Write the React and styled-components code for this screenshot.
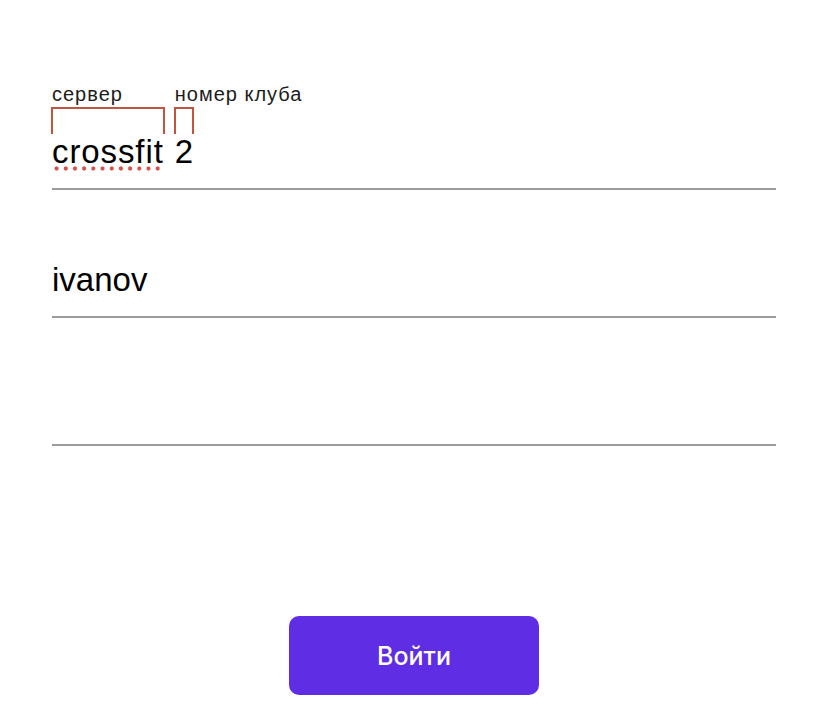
import React from 'react';
import styled, { createGlobalStyle } from 'styled-components';

const GlobalStyle = createGlobalStyle`
  html, body {
    margin: 0;
    padding: 0;
    background: #ffffff;
  }
  body {
    font-family: "Liberation Sans", Arial, sans-serif;
    color: #000;
  }
`;

const Page = styled.div`
  width: 828px;
  min-height: 725px;
  box-sizing: border-box;
  padding: 82px 52px 0;
  display: flex;
  flex-direction: column;
`;

const Field = styled.div`
  display: flex;
  flex-direction: column;
  padding-top: ${p => (p.first ? '0' : '72px')};
  padding-bottom: 18px;
  border-bottom: 2px solid #9b9b9b;
`;

const SegmentRow = styled.div`
  display: flex;
  align-items: flex-start;
  gap: 11px;
`;

const Segment = styled.div`
  display: flex;
  flex-direction: column;
  align-items: stretch;
`;

// подпись над сегментом, может быть шире самой скобки
const Label = styled.span`
  width: 0;
  white-space: nowrap;
  font-size: 20px;
  line-height: 24px;
  color: #1c1c1c;
  letter-spacing: 1px;
`;

const Bracket = styled.div`
  margin-top: 1px;
  height: 25px;
  border: 2px solid #c2553f;
  border-bottom: none;
  margin-left: -1px;
  margin-right: -1px;
`;

const Value = styled.span`
  position: relative;
  font-size: 33px;
  line-height: 36px;
  white-space: nowrap;
  letter-spacing: ${p => (p.wide ? '0.9px' : '0')};

  ${p =>
    p.misspelled &&
    `
    &::after {
      content: '';
      position: absolute;
      left: 0;
      right: 0;
      bottom: -1px;
      height: 5px;
      background: radial-gradient(circle, #d8514a 1.8px, rgba(216, 81, 74, 0) 2.4px) 0 0 / 9.2px 5px repeat-x;
    }
  `}
`;

const InputText = styled.div`
  font-size: 33px;
  line-height: 36px;
  height: 36px;
  white-space: nowrap;
`;

const ButtonRow = styled.div`
  display: flex;
  justify-content: center;
  margin-top: 170px;
`;

const LoginButton = styled.button`
  width: 250px;
  height: 79px;
  border: none;
  border-radius: 10px;
  background: #5f2de3;
  color: #ffffff;
  font-family: Inter, "Noto Sans", sans-serif;
  font-size: 25px;
  font-weight: 500;
  cursor: pointer;
`;

const segments = [
  { label: 'сервер', value: 'crossfit', misspelled: true },
  { label: 'номер клуба', value: '2' },
];

const App = () => {
  return (
    <>
      <GlobalStyle />
      <Page>
        <Field first>
          <SegmentRow>
            {segments.map((s, i) => (
              <Segment key={i}>
                <Label>{s.label}</Label>
                <Bracket />
                <Value misspelled={s.misspelled} wide={s.misspelled}>
                  {s.value}
                </Value>
              </Segment>
            ))}
          </SegmentRow>
        </Field>
        <Field>
          <InputText>ivanov</InputText>
        </Field>
        <Field>
          <InputText />
        </Field>
        <ButtonRow>
          <LoginButton>Войти</LoginButton>
        </ButtonRow>
      </Page>
    </>
  );
};

export default App;
